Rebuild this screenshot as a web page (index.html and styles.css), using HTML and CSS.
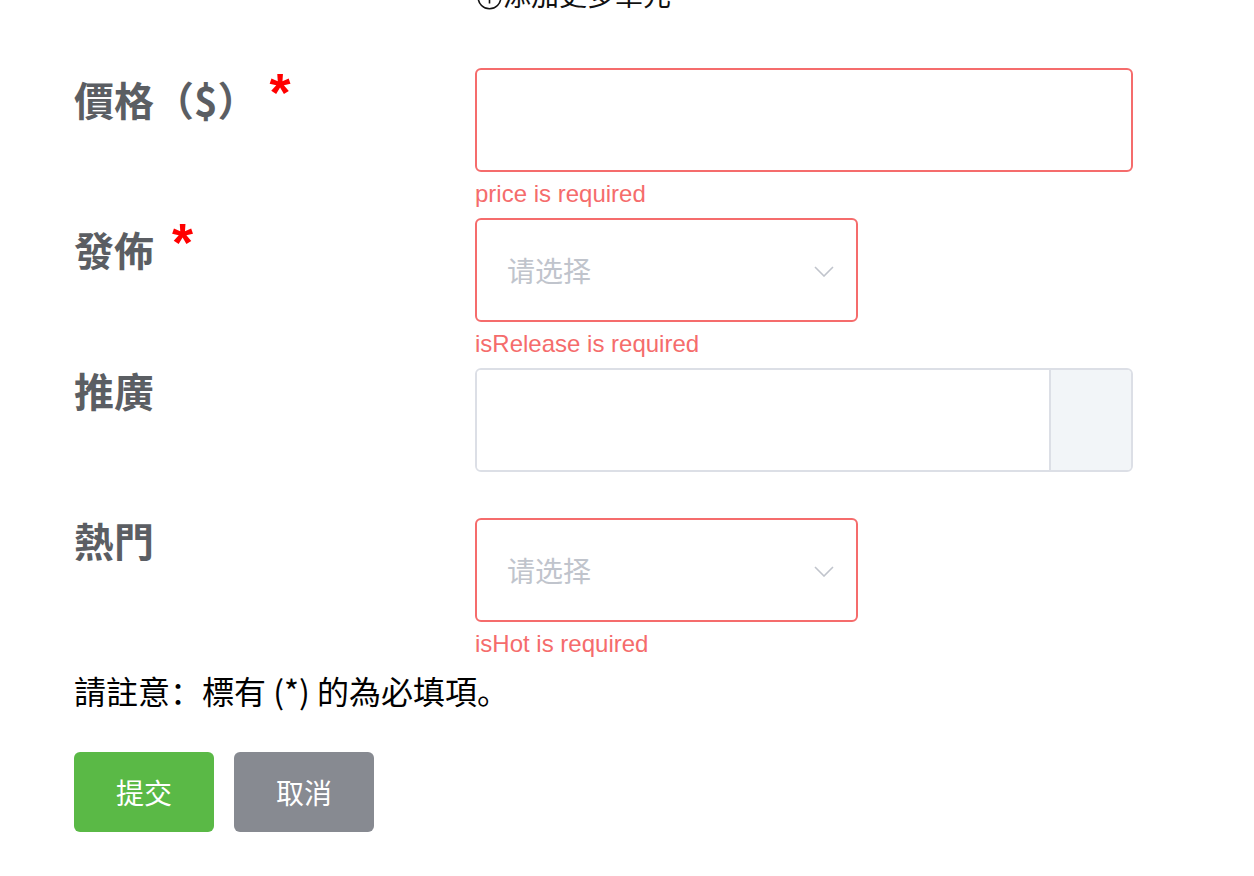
FILE: index.html
```html
<!DOCTYPE html>
<html lang="zh-CN">
<head>
<meta charset="utf-8">
<title>Form</title>
<link rel="stylesheet" href="styles.css">
</head>
<body>
<div class="page">
  <div class="add-more">
    <svg class="add-icon" width="25" height="25" viewBox="0 0 25 25" aria-hidden="true">
      <circle cx="12.5" cy="12.5" r="11.3" fill="none" stroke="#111" stroke-width="1.6"/>
      <path d="M12.5 6.5v12M6.5 12.5h12" stroke="#111" stroke-width="1.6" fill="none"/>
    </svg><span>添加更多單元</span>
  </div>

  <form class="form">
    <div class="form-item">
      <label class="form-label required">價格（$）<span class="star">*</span></label>
      <div class="form-control">
        <div class="input wide is-error"></div>
        <div class="error">price is required</div>
      </div>
    </div>

    <div class="form-item">
      <label class="form-label required">發佈<span class="star star-short">*</span></label>
      <div class="form-control">
        <div class="select is-error">
          <span class="placeholder">请选择</span>
          <svg class="chevron" width="20" height="11" viewBox="0 0 20 11" aria-hidden="true">
            <polyline points="1,1 10,10 19,1" fill="none" stroke="#c0c4cc" stroke-width="1.6"/>
          </svg>
        </div>
        <div class="error">isRelease is required</div>
      </div>
    </div>

    <div class="form-item">
      <label class="form-label">推廣</label>
      <div class="form-control">
        <div class="input-group wide">
          <div class="input-inner"></div>
          <div class="append"></div>
        </div>
        <div class="error"></div>
      </div>
    </div>

    <div class="form-item">
      <label class="form-label">熱門</label>
      <div class="form-control">
        <div class="select is-error">
          <span class="placeholder">请选择</span>
          <svg class="chevron" width="20" height="11" viewBox="0 0 20 11" aria-hidden="true">
            <polyline points="1,1 10,10 19,1" fill="none" stroke="#c0c4cc" stroke-width="1.6"/>
          </svg>
        </div>
        <div class="error">isHot is required</div>
      </div>
    </div>
  </form>

  <p class="note">請註意：標有 (*) 的為必填項。</p>

  <div class="actions">
    <button type="button" class="btn btn-submit">提交</button>
    <button type="button" class="btn btn-cancel">取消</button>
  </div>
</div>
</body>
</html>
```

FILE: styles.css
```css
html, body {
  margin: 0;
  padding: 0;
  background: #ffffff;
}

body {
  font-family: "Noto Sans CJK SC", "Noto Sans CJK TC", sans-serif;
  color: #000;
}

.page {
  padding-left: 74px;
  overflow: hidden;
}

.add-more {
  margin: -26px 0 54px 401px;
  height: 40px;
  line-height: 40px;
  font-size: 28px;
  color: #111;
  white-space: nowrap;
}

.add-icon {
  vertical-align: -4px;
  margin-left: 2px;
  margin-right: 1px;
}

.form-item {
  display: flex;
  align-items: flex-start;
}

.form-label {
  flex: 0 0 401px;
  font-size: 40px;
  font-weight: 700;
  line-height: 45px;
  color: #5b5e63;
  white-space: nowrap;
}

.form-label.required {
  padding-top: 9px;
}

.star {
  display: inline-block;
  vertical-align: top;
  margin-top: -12px;
  margin-left: 12px;
  font-family: "Liberation Sans", Arial, sans-serif;
  font-size: 54px;
  line-height: 54px;
  font-weight: 700;
  color: #ff0000;
}

.star-short {
  margin-left: 18px;
}

.form-control {
  display: flex;
  flex-direction: column;
}

.input {
  box-sizing: border-box;
  height: 104px;
  border: 2px solid #dcdfe6;
  border-radius: 6px;
  background: #fff;
}

.wide {
  width: 658px;
}

.is-error {
  border-color: #f56c6c;
}

.select {
  box-sizing: border-box;
  width: 383px;
  height: 104px;
  border: 2px solid #dcdfe6;
  border-radius: 6px;
  display: flex;
  align-items: center;
  justify-content: space-between;
  padding: 0 22px 0 30px;
}

.select.is-error {
  border-color: #f56c6c;
}

.placeholder {
  font-size: 28px;
  color: #c0c4cc;
}

.chevron {
  display: block;
  margin-top: 2px;
}

.input-group {
  box-sizing: border-box;
  height: 104px;
  border: 2px solid #dcdfe6;
  border-radius: 6px;
  display: flex;
  overflow: hidden;
}

.input-inner {
  flex: 1;
  background: #fff;
}

.append {
  flex: 0 0 80px;
  border-left: 2px solid #dcdfe6;
  background: #f2f5f8;
}

.error {
  height: 46px;
  line-height: 44px;
  font-family: "Liberation Sans", Arial, sans-serif;
  font-size: 24px;
  color: #f56c6c;
  white-space: nowrap;
}

.note {
  margin: 0;
  font-size: 32px;
  line-height: 44px;
  color: #000;
}

.actions {
  display: flex;
  gap: 20px;
  margin-top: 40px;
}

.btn {
  width: 140px;
  height: 80px;
  border: none;
  border-radius: 6px;
  font-family: inherit;
  font-size: 28px;
  color: #fff;
  padding: 0;
  cursor: pointer;
}

.btn-submit {
  background: #5ab946;
}

.btn-cancel {
  background: #878a91;
}
```
